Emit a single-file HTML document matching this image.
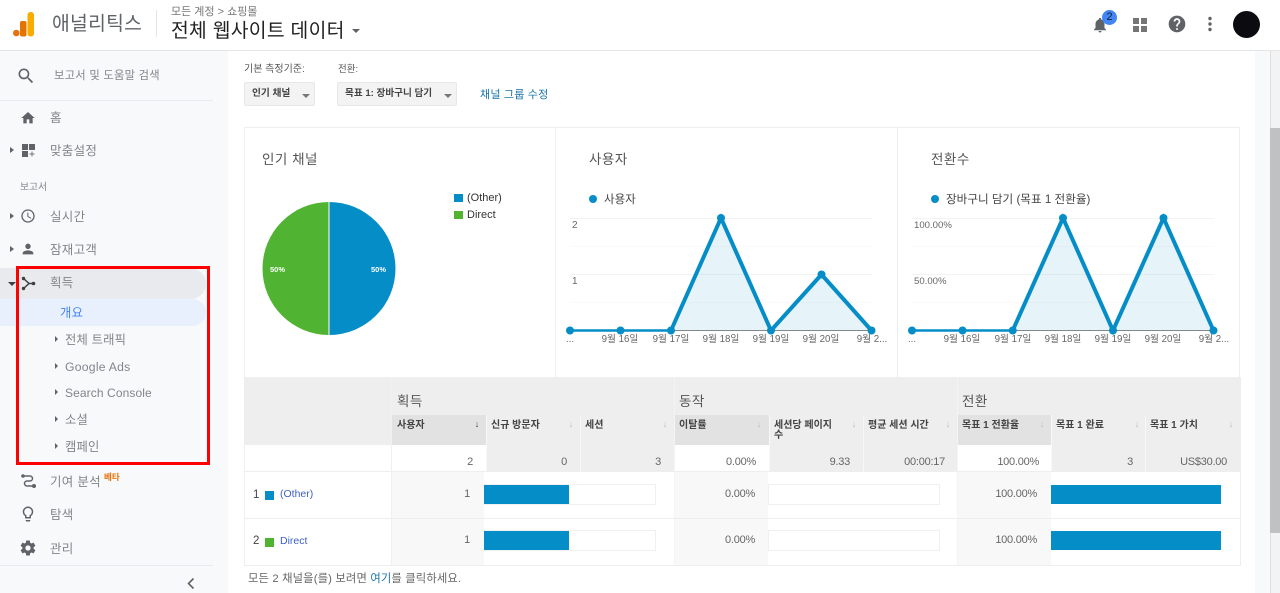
<!DOCTYPE html>
<html lang="ko"><head><meta charset="utf-8"><title>애널리틱스</title>
<style>
html,body{margin:0;padding:0;width:1280px;height:593px;overflow:hidden;background:#fff}
body{position:relative;font-family:"Liberation Sans","Noto Sans CJK KR",sans-serif;color:#555}
.b{position:absolute}
.t{position:absolute;white-space:nowrap;line-height:20px;height:20px;margin-top:2px}
.nav{font-size:12.500px;color:#80868b;letter-spacing:.3px}
.sub{font-size:12.300px;color:#80868b}
.h{font-size:10px;font-weight:bold;color:#444;line-height:11px;height:11px;margin-top:2px}
.g{font-size:13.500px;color:#555;letter-spacing:.5px}
.r{font-size:11px;color:#666;text-align:right;width:80px;letter-spacing:-.25px;margin-top:1px}
.ax{font-size:9.700px;color:#666;text-align:center;width:60px;margin-top:2px}
.tr{position:absolute;width:0;height:0;border-left:4px solid #5f6368;border-top:3px solid transparent;border-bottom:3px solid transparent}
.tdn{position:absolute;width:0;height:0;border-top:4px solid #5f6368;border-left:4px solid transparent;border-right:4px solid transparent}
.ic{position:absolute}
.s{position:absolute;width:8px;height:10px;font-size:9px;line-height:10px;color:#bbb;text-align:center}
</style></head><body>

<!-- sidebar and background -->
<div class="b" style="left:0;top:50px;width:228px;height:543px;background:#f8f9fb"></div>
<div class="b" style="left:1255px;top:50px;width:15px;height:543px;background:#f8f9fb"></div>
<div class="b" style="left:1270px;top:50px;width:10px;height:543px;background:#f3f3f3;border-left:1px solid #ddd;box-sizing:border-box"></div>
<div class="b" style="left:1270px;top:128px;width:10px;height:405px;background:#c1c1c1"></div>
<div class="b" style="left:0;top:50px;width:1280px;height:1px;background:#e3e5e7"></div>

<!-- header -->
<svg class="ic" style="left:10px;top:8px" width="28" height="30" viewBox="0 0 28 30">
<circle cx="6.300" cy="25" r="3.300" fill="#e8710a"/>
<rect x="10" y="13" width="6.500" height="15.500" rx="2" fill="#e37400"/>
<rect x="17.500" y="4" width="6.500" height="24.500" rx="3" fill="#f9ab00"/></svg>
<div class="t" style="left:52px;top:13px;font-size:19.300px;color:#5f6368;letter-spacing:.3px">애널리틱스</div>
<div class="b" style="left:156px;top:10px;width:1px;height:27px;background:#e3e5e7"></div>
<div class="t" style="left:171px;top:0px;font-size:11px;color:#777">모든 계정 &gt; 쇼핑몰</div>
<div class="t" style="left:171px;top:20px;font-size:19.300px;color:#222;letter-spacing:.3px">전체 웹사이트 데이터</div>
<div class="tdn" style="left:352px;top:29px"></div>

<svg class="ic" style="left:1091px;top:16px" width="18" height="18" viewBox="0 0 24 24"><path fill="#5f6368" d="M12 22c1.100 0 2-.9 2-2h-4c0 1.100.89 2 2 2zm6-6v-5c0-3.070-1.640-5.640-4.500-6.320V4c0-.83-.67-1.500-1.500-1.500s-1.500.67-1.500 1.500v.68C7.630 5.360 6 7.920 6 11v5l-2 2v1h16v-1l-2-2z"/></svg>
<div class="b" style="left:1102px;top:10px;width:15px;height:15px;border-radius:50%;background:#4285f4;color:#123;font-size:11px;line-height:15px;text-align:center">2</div>
<svg class="ic" style="left:1133px;top:18px" width="14" height="14"><path fill="#757575" d="M0 0h6v6H0zM8 0h6v6H8zM0 8h6v6H0zM8 8h6v6H8z"/></svg>
<svg class="ic" style="left:1167px;top:14px" width="20" height="20" viewBox="0 0 24 24"><path fill="#5f6368" d="M12 2C6.480 2 2 6.480 2 12s4.480 10 10 10 10-4.480 10-10S17.520 2 12 2zm1 17h-2v-2h2v2zm2.070-7.750l-.9.92C13.450 12.900 13 13.500 13 15h-2v-.5c0-1.100.45-2.100 1.170-2.830l1.240-1.260c.37-.36.59-.86.59-1.410 0-1.100-.9-2-2-2s-2 .9-2 2H8c0-2.210 1.790-4 4-4s4 1.790 4 4c0 .88-.36 1.680-.93 2.250z"/></svg>
<svg class="ic" style="left:1207px;top:16px" width="6" height="16"><circle cx="3" cy="2.500" r="1.700" fill="#5f6368"/><circle cx="3" cy="8" r="1.700" fill="#5f6368"/><circle cx="3" cy="13.500" r="1.700" fill="#5f6368"/></svg>
<div class="b" style="left:1233px;top:10.500px;width:27px;height:27px;border-radius:50%;background:#0c0c10"></div>

<!-- sidebar -->
<svg class="ic" style="left:16px;top:66px" width="20" height="20" viewBox="0 0 24 24"><path fill="#5f6368" d="M15.500 14h-.79l-.28-.27A6.471 6.471 0 0 0 16 9.500 6.500 6.500 0 1 0 9.500 16c1.610 0 3.090-.59 4.230-1.570l.27.28v.79l5 4.990L20.490 19l-4.990-5zm-6 0C7.010 14 5 11.990 5 9.500S7.010 5 9.500 5 14 7.010 14 9.500 11.990 14 9.500 14z"/></svg>
<div class="t" style="left:54px;top:64px;font-size:11.300px;color:#80868b;letter-spacing:.25px">보고서 및 도움말 검색</div>
<div class="b" style="left:0;top:100px;width:213px;height:1px;background:#e8eaed"></div>

<svg class="ic" style="left:20px;top:110px" width="16" height="16" viewBox="0 0 24 24"><path fill="#5f6368" d="M10 20v-6h4v6h5v-8h3L12 3 2 12h3v8z"/></svg>
<div class="t nav" style="left:50px;top:106px">홈</div>

<div class="tr" style="left:10px;top:147px"></div>
<svg class="ic" style="left:22px;top:144px" width="13" height="13"><path fill="#5f6368" d="M0 0h6v6H0zM7 0h6v6H7zM0 7h6v6H0z"/><path fill="#70757a" d="M9.500 7.500h1v2h2v1h-2v2h-1v-2h-2v-1h2z"/></svg>
<div class="t nav" style="left:50px;top:139px">맞춤설정</div>

<div class="t" style="left:20px;top:176px;font-size:9.800px;color:#80868b">보고서</div>

<div class="tr" style="left:10px;top:213px"></div>
<svg class="ic" style="left:20px;top:208px" width="16" height="16" viewBox="0 0 24 24"><path fill="#5f6368" d="M11.990 2C6.470 2 2 6.480 2 12s4.470 10 9.990 10C17.520 22 22 17.520 22 12S17.520 2 11.990 2zM12 20c-4.420 0-8-3.580-8-8s3.580-8 8-8 8 3.580 8 8-3.580 8-8 8zm.5-13H11v6l5.250 3.150.75-1.230-4.500-2.670z"/></svg>
<div class="t nav" style="left:50px;top:205px">실시간</div>

<div class="tr" style="left:10px;top:246px"></div>
<svg class="ic" style="left:20px;top:241px" width="16" height="16" viewBox="0 0 24 24"><path fill="#5f6368" d="M12 12c2.210 0 4-1.790 4-4s-1.790-4-4-4-4 1.790-4 4 1.790 4 4 4zm0 2c-2.670 0-8 1.340-8 4v2h16v-2c0-2.660-5.330-4-8-4z"/></svg>
<div class="t nav" style="left:50px;top:238px">잠재고객</div>

<div class="b" style="left:0;top:268px;width:206px;height:31px;background:#e8eaed;border-radius:0 16px 16px 0"></div>
<div class="b" style="left:0;top:299px;width:206px;height:27px;background:#e8f0fe;border-radius:0 14px 14px 0"></div>
<div class="tdn" style="left:8px;top:282px;border-top-color:#3c4043"></div>
<svg class="ic" style="left:21px;top:276px" width="15" height="15"><path d="M2 2L8 7.500L2 13M8 7.500h5" fill="none" stroke="#3c4043" stroke-width="1.500"/><circle cx="2.500" cy="2.500" r="1.700" fill="#3c4043"/><circle cx="2.500" cy="12.500" r="1.700" fill="#3c4043"/><circle cx="12.500" cy="7.500" r="1.800" fill="#3c4043"/></svg>
<div class="t nav" style="left:50px;top:271px">획득</div>
<div class="t" style="left:60px;top:301px;font-size:12.300px;color:#4285f4;letter-spacing:.3px">개요</div>

<div class="tr" style="left:55px;top:336px;border-left-width:3.500px"></div>
<div class="t sub" style="left:65px;top:328px;letter-spacing:.2px">전체 트래픽</div>
<div class="tr" style="left:55px;top:363px;border-left-width:3.500px"></div>
<div class="t sub" style="left:65px;top:355px;font-size:12.200px;letter-spacing:.25px">Google Ads</div>
<div class="tr" style="left:55px;top:389px;border-left-width:3.500px"></div>
<div class="t sub" style="left:65px;top:381px;font-size:12px;letter-spacing:.1px">Search Console</div>
<div class="tr" style="left:55px;top:416px;border-left-width:3.500px"></div>
<div class="t sub" style="left:65px;top:408px;letter-spacing:.2px">소셜</div>
<div class="tr" style="left:55px;top:443px;border-left-width:3.500px"></div>
<div class="t sub" style="left:65px;top:435px;letter-spacing:.2px">캠페인</div>

<div class="b" style="left:16px;top:266px;width:194px;height:199px;border:3px solid #f00;box-sizing:border-box"></div>

<svg class="ic" style="left:20px;top:473px" width="17" height="16"><path d="M3 3h7a2.500 2.500 0 0 1 0 5H7a2.500 2.500 0 0 0 0 5h6" fill="none" stroke="#5f6368" stroke-width="1.500"/><circle cx="3" cy="3" r="1.800" fill="#5f6368"/><circle cx="14" cy="13" r="2" fill="#5f6368"/></svg>
<div class="t nav" style="left:50px;top:470px">기여 분석</div>
<div class="t" style="left:104px;top:465px;font-size:8.500px;font-weight:bold;color:#e8710a">베타</div>

<svg class="ic" style="left:19px;top:505px" width="18" height="18" viewBox="0 0 24 24"><path fill="#5f6368" d="M9 21c0 .55.45 1 1 1h4c.55 0 1-.45 1-1v-1H9v1zm3-19C8.140 2 5 5.140 5 9c0 2.380 1.190 4.470 3 5.740V17c0 .55.45 1 1 1h6c.55 0 1-.45 1-1v-2.260c1.810-1.270 3-3.360 3-5.740 0-3.860-3.140-7-7-7zm2.850 11.100l-.85.6V16h-4v-2.300l-.85-.6A4.997 4.997 0 0 1 7 9c0-2.760 2.240-5 5-5s5 2.240 5 5c0 1.630-.8 3.160-2.150 4.100z"/></svg>
<div class="t nav" style="left:50px;top:503px">탐색</div>
<svg class="ic" style="left:19px;top:539px" width="18" height="18" viewBox="0 0 24 24"><path fill="#5f6368" d="M19.430 12.980c.04-.32.07-.64.07-.98s-.03-.66-.07-.98l2.110-1.650c.19-.15.24-.42.12-.64l-2-3.460c-.12-.22-.39-.3-.61-.22l-2.490 1c-.52-.4-1.080-.73-1.690-.98l-.38-2.650C14.460 2.180 14.250 2 14 2h-4c-.25 0-.46.18-.49.42l-.38 2.650c-.61.25-1.170.59-1.690.98l-2.490-1c-.23-.09-.49 0-.61.22l-2 3.460c-.13.22-.07.49.12.64l2.110 1.650c-.04.32-.07.65-.07.98s.03.66.07.98l-2.110 1.650c-.19.15-.24.42-.12.64l2 3.460c.12.22.39.3.61.22l2.490-1c.52.4 1.080.73 1.690.98l.38 2.650c.03.24.24.42.49.42h4c.25 0 .46-.18.49-.42l.38-2.650c.61-.25 1.170-.59 1.690-.98l2.490 1c.23.09.49 0 .61-.22l2-3.460c.12-.22.07-.49-.12-.64l-2.110-1.650zM12 15.500c-1.930 0-3.500-1.570-3.500-3.500s1.570-3.500 3.500-3.500 3.500 1.570 3.500 3.500-1.570 3.500-3.500 3.500z"/></svg>
<div class="t nav" style="left:50px;top:537px">관리</div>
<div class="b" style="left:0;top:565px;width:213px;height:1px;background:#e8eaed"></div>
<svg class="ic" style="left:186px;top:577px" width="10" height="13"><path d="M7.500 1.500L2.500 6.500L7.500 11.500" fill="none" stroke="#5f6368" stroke-width="1.600"/></svg>

<!-- controls -->
<div class="t" style="left:244px;top:58px;font-size:10px;color:#555">기본 측정기준:</div>
<div class="t" style="left:338px;top:58px;font-size:9.500px;color:#555">전환:</div>
<div class="b" style="left:244px;top:82px;width:71px;height:24px;background:#f3f3f3;border:1px solid #e8e8e8;box-sizing:border-box;border-radius:2px"></div>
<div class="t" style="left:252px;top:82px;font-size:9.700px;font-weight:bold;color:#444">인기 채널</div>
<div class="tdn" style="left:302px;top:94px;border-top-color:#777"></div>
<div class="b" style="left:337px;top:82px;width:120px;height:24px;background:#f3f3f3;border:1px solid #e8e8e8;box-sizing:border-box;border-radius:2px"></div>
<div class="t" style="left:345px;top:82px;font-size:9.600px;font-weight:bold;color:#444">목표 1: 장바구니 담기</div>
<div class="tdn" style="left:444px;top:94px;border-top-color:#777"></div>
<div class="t" style="left:480px;top:83px;font-size:11px;color:#1a73a8;letter-spacing:.2px">채널 그룹 수정</div>

<!-- chart panel -->
<div class="b" style="left:244px;top:127px;width:996px;height:251px;border:1px solid #eee;box-sizing:border-box"></div>
<div class="b" style="left:555px;top:127px;width:1px;height:250px;background:#eee"></div>
<div class="b" style="left:897px;top:127px;width:1px;height:250px;background:#eee"></div>
<div class="t g" style="left:262px;top:148px">인기 채널</div>
<div class="t g" style="left:589px;top:148px">사용자</div>
<div class="t g" style="left:931px;top:148px">전환수</div>

<svg class="ic" style="left:0;top:0" width="1280" height="593">
<path d="M329 202A66.500 66.500 0 0 1 329 335Z" fill="#058dc7"/>
<path d="M329 202A66.500 66.500 0 0 0 329 335Z" fill="#50b432"/>
<path d="M329 202V335" stroke="#fff" stroke-width="1"/>
<rect x="454" y="194" width="9" height="8" fill="#058dc7"/>
<rect x="454" y="211" width="9" height="8" fill="#50b432"/>
<g stroke="#f3f3f3" stroke-width="1">
<path d="M570 218.500H872M570 274.500H872M912 218.500H1214M912 274.500H1214"/>
<path stroke="#f9f9f9" d="M570 246.500H872M570 302.500H872M912 246.500H1214M912 302.500H1214"/>
</g>
<path d="M570 330.500H872M912 330.500H1214" stroke="#888" stroke-width="1"/>
<path d="M671 330.500L721 218L771 330.500L821.500 274.500L871.500 330.500Z" fill="#058dc7" fill-opacity=".1"/>
<path d="M1012.700 330.500L1063 218L1113 330.500L1163.500 218L1213.500 330.500Z" fill="#058dc7" fill-opacity=".1"/>
<path d="M570 330.500H671" fill="none" stroke="#058dc7" stroke-width="2.500"/>
<path d="M671 330.500L721 218L771 330.500L821.500 274.500L871.500 330.500" fill="none" stroke="#058dc7" stroke-width="4"/>
<path d="M912 330.500H1012.700" fill="none" stroke="#058dc7" stroke-width="2.500"/>
<path d="M1012.700 330.500L1063 218L1113 330.500L1163.500 218L1213.500 330.500" fill="none" stroke="#058dc7" stroke-width="4"/>
<g fill="#058dc7">
<circle cx="593" cy="199" r="4"/><circle cx="935" cy="199" r="4"/>
<circle cx="570" cy="330.500" r="4"/><circle cx="620.500" cy="330.500" r="4"/><circle cx="671" cy="330.500" r="4"/><circle cx="721" cy="218" r="4"/><circle cx="771" cy="330.500" r="4"/><circle cx="821.500" cy="274.500" r="4"/><circle cx="871.500" cy="330.500" r="4"/>
<circle cx="912" cy="330.500" r="4"/><circle cx="962.500" cy="330.500" r="4"/><circle cx="1012.700" cy="330.500" r="4"/><circle cx="1063" cy="218" r="4"/><circle cx="1113" cy="330.500" r="4"/><circle cx="1163.500" cy="218" r="4"/><circle cx="1213.500" cy="330.500" r="4"/>
</g>
</svg>
<div class="t" style="left:270px;top:258px;font-size:7.500px;font-weight:bold;color:#fff">50%</div>
<div class="t" style="left:371px;top:258px;font-size:7.500px;font-weight:bold;color:#fff">50%</div>
<div class="t" style="left:467px;top:186px;font-size:11px;color:#333">(Other)</div>
<div class="t" style="left:467px;top:203px;font-size:11px;color:#333">Direct</div>
<div class="t" style="left:604px;top:188px;font-size:11.500px;color:#444">사용자</div>
<div class="t" style="left:946px;top:188px;font-size:11.600px;color:#444">장바구니 담기 (목표 1 전환율)</div>
<div class="t" style="left:572px;top:214px;font-size:10px;color:#666">2</div>
<div class="t" style="left:572px;top:270px;font-size:10px;color:#666">1</div>
<div class="t" style="left:914px;top:214px;font-size:9.600px;color:#666">100.00%</div>
<div class="t" style="left:914px;top:270px;font-size:9.600px;color:#666">50.00%</div>
<div class="t ax" style="left:540px;top:328px">...</div><div class="t ax" style="left:590px;top:328px">9월 16일</div><div class="t ax" style="left:641px;top:328px">9월 17일</div><div class="t ax" style="left:691px;top:328px">9월 18일</div><div class="t ax" style="left:741px;top:328px">9월 19일</div><div class="t ax" style="left:791px;top:328px">9월 20일</div><div class="t ax" style="left:842px;top:328px">9월 2...</div>
<div class="t ax" style="left:882px;top:328px">...</div><div class="t ax" style="left:932px;top:328px">9월 16일</div><div class="t ax" style="left:983px;top:328px">9월 17일</div><div class="t ax" style="left:1033px;top:328px">9월 18일</div><div class="t ax" style="left:1083px;top:328px">9월 19일</div><div class="t ax" style="left:1133px;top:328px">9월 20일</div><div class="t ax" style="left:1184px;top:328px">9월 2...</div>

<!-- table -->
<div class="b" style="left:244px;top:377px;width:996px;height:68px;background:#eee"></div>
<div class="b" style="left:244px;top:445px;width:148px;height:26px;background:#fff"></div>
<div class="b" style="left:392px;top:415px;width:95px;height:30px;background:#e2e2e2"></div>
<div class="b" style="left:674px;top:415px;width:95px;height:30px;background:#e2e2e2"></div>
<div class="b" style="left:957px;top:415px;width:95px;height:30px;background:#e2e2e2"></div>
<div class="b" style="left:392px;top:445px;width:282px;height:26px;background:#eee"></div>
<div class="b" style="left:674px;top:445px;width:283px;height:26px;background:#eee"></div>
<div class="b" style="left:957px;top:445px;width:283px;height:26px;background:#eee"></div>
<div class="b" style="left:392px;top:445px;width:94px;height:26px;background:#fff"></div>
<div class="b" style="left:675px;top:445px;width:94px;height:26px;background:#fff"></div>
<div class="b" style="left:958px;top:445px;width:93px;height:26px;background:#fff"></div>
<div class="b" style="left:392px;top:471px;width:92px;height:94px;background:#f8f8f8"></div>
<div class="b" style="left:674px;top:471px;width:94px;height:94px;background:#f8f8f8"></div>
<div class="b" style="left:957px;top:471px;width:94px;height:94px;background:#f8f8f8"></div>
<!-- separators -->
<div class="b" style="left:391px;top:377px;width:1px;height:188px;background:#f0f0f0"></div>
<div class="b" style="left:486px;top:415px;width:1px;height:56px;background:#f8f8f8"></div>
<div class="b" style="left:580px;top:415px;width:1px;height:56px;background:#f8f8f8"></div>
<div class="b" style="left:674px;top:377px;width:1px;height:188px;background:#f4f4f4"></div>
<div class="b" style="left:769px;top:415px;width:1px;height:56px;background:#f8f8f8"></div>
<div class="b" style="left:863px;top:415px;width:1px;height:56px;background:#f8f8f8"></div>
<div class="b" style="left:957px;top:377px;width:1px;height:188px;background:#f4f4f4"></div>
<div class="b" style="left:1145px;top:415px;width:1px;height:56px;background:#f8f8f8"></div>
<div class="b" style="left:1051px;top:415px;width:1px;height:56px;background:#f8f8f8"></div>
<div class="b" style="left:244px;top:471px;width:996px;height:1px;background:#eee"></div>
<div class="b" style="left:244px;top:518px;width:996px;height:1px;background:#eee"></div>
<div class="b" style="left:244px;top:565px;width:996px;height:1px;background:#eee"></div>
<div class="b" style="left:244px;top:377px;width:1px;height:188px;background:#eee"></div>
<div class="b" style="left:1240px;top:377px;width:1px;height:189px;background:#eee"></div>

<div class="t g" style="left:397px;top:390px">획득</div>
<div class="t g" style="left:679px;top:390px">동작</div>
<div class="t g" style="left:962px;top:390px">전환</div>

<div class="t h" style="left:397px;top:418px">사용자</div>
<div class="t h" style="left:491px;top:418px">신규 방문자</div>
<div class="t h" style="left:585px;top:418px">세션</div>
<div class="t h" style="left:679px;top:418px">이탈률</div>
<div class="t h" style="left:774px;top:418px">세션당 페이지</div>
<div class="t h" style="left:774px;top:428px">수</div>
<div class="t h" style="left:868px;top:418px">평균 세션 시간</div>
<div class="t h" style="left:962px;top:418px">목표 1 전환율</div>
<div class="t h" style="left:1056px;top:418px">목표 1 완료</div>
<div class="t h" style="left:1150px;top:418px">목표 1 가치</div>

<div class="s" style="left:473px;top:419px;color:#444">↓</div>
<div class="s" style="left:567px;top:419px">↓</div>
<div class="s" style="left:661px;top:419px">↓</div>
<div class="s" style="left:755px;top:419px">↓</div>
<div class="s" style="left:850px;top:419px">↓</div>
<div class="s" style="left:944px;top:419px">↓</div>
<div class="s" style="left:1038px;top:419px">↓</div>
<div class="s" style="left:1133px;top:419px">↓</div>
<div class="s" style="left:1227px;top:419px">↓</div>

<div class="t r" style="left:393px;top:451px">2</div>
<div class="t r" style="left:487px;top:451px">0</div>
<div class="t r" style="left:581px;top:451px">3</div>
<div class="t r" style="left:676px;top:451px">0.00%</div>
<div class="t r" style="left:770px;top:451px">9.33</div>
<div class="t r" style="left:865px;top:451px">00:00:17</div>
<div class="t r" style="left:959px;top:451px">100.00%</div>
<div class="t r" style="left:1053px;top:451px">3</div>
<div class="t r" style="left:1147px;top:451px">US$30.00</div>

<div class="t r" style="left:390px;top:483px">1</div>
<div class="t r" style="left:390px;top:529px">1</div>
<div class="t r" style="left:675px;top:483px">0.00%</div>
<div class="t r" style="left:675px;top:529px">0.00%</div>
<div class="t r" style="left:957px;top:483px">100.00%</div>
<div class="t r" style="left:957px;top:529px">100.00%</div>

<div class="t" style="left:253px;top:483px;font-size:11.500px;color:#444">1</div>
<div class="b" style="left:265px;top:491px;width:9px;height:9px;background:#058dc7"></div>
<div class="t" style="left:280px;top:482px;font-size:10.500px;color:#3f5fc5">(Other)</div>
<div class="t" style="left:253px;top:529px;font-size:11.500px;color:#444">2</div>
<div class="b" style="left:265px;top:538px;width:9px;height:9px;background:#50b432"></div>
<div class="t" style="left:280px;top:529px;font-size:10.500px;color:#3f5fc5">Direct</div>

<div class="b" style="left:484px;top:484px;width:172px;height:21px;border:1px solid #f0f0f0;box-sizing:border-box"></div>
<div class="b" style="left:484px;top:485px;width:85px;height:19px;background:#058dc7"></div>
<div class="b" style="left:484px;top:530px;width:172px;height:21px;border:1px solid #f0f0f0;box-sizing:border-box"></div>
<div class="b" style="left:484px;top:531px;width:85px;height:19px;background:#058dc7"></div>
<div class="b" style="left:768px;top:484px;width:172px;height:21px;border:1px solid #f0f0f0;box-sizing:border-box"></div>
<div class="b" style="left:768px;top:530px;width:172px;height:21px;border:1px solid #f0f0f0;box-sizing:border-box"></div>
<div class="b" style="left:1051px;top:485px;width:170px;height:19px;background:#058dc7"></div>
<div class="b" style="left:1051px;top:531px;width:170px;height:19px;background:#058dc7"></div>

<div class="t" style="left:248px;top:567px;font-size:11.300px;color:#666;letter-spacing:.15px">모든 2 채널을(를) 보려면 <span style="color:#1a73a8">여기</span>를 클릭하세요.</div>
</body></html>
